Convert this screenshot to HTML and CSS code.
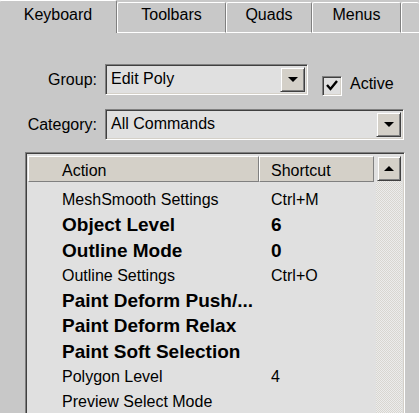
FILE: index.html
```html
<!DOCTYPE html>
<html lang="en">
<head>
    <meta charset="UTF-8">
    <title>Customize User Interface</title>
    <link rel="stylesheet" href="styles.css">
</head>
<body>
    <div class="panel">
        <div class="tabs">
            <div class="tab active">Keyboard</div>
            <div class="tab">Toolbars</div>
            <div class="tab">Quads</div>
            <div class="tab">Menus</div>
            <div class="tab tab-rest"></div>
        </div>

        <div class="page">
            <div class="field-row">
                <span class="field-label">Group:</span>
                <div class="combo combo-group">
                    <span class="combo-text">Edit Poly</span>
                    <span class="combo-btn"><span class="arrow-down"></span></span>
                </div>
                <div class="check">
                    <span class="check-box">
                        <svg width="12" height="11" viewBox="0 0 12 11"><path d="M1 5 L4.5 9 L11 1" fill="none" stroke="#000" stroke-width="2.4"/></svg>
                    </span>
                    <span class="check-label">Active</span>
                </div>
            </div>

            <div class="field-row">
                <span class="field-label">Category:</span>
                <div class="combo combo-category">
                    <span class="combo-text">All Commands</span>
                    <span class="combo-btn"><span class="arrow-down"></span></span>
                </div>
            </div>

            <div class="list">
                <div class="list-main">
                    <div class="list-head">
                        <div class="head-cell col-action">Action</div>
                        <div class="head-cell col-shortcut">Shortcut</div>
                    </div>
                    <div class="list-body">
                        <div class="list-row"><span class="col-action">MeshSmooth Settings</span><span class="col-shortcut">Ctrl+M</span></div>
                        <div class="list-row bold"><span class="col-action">Object Level</span><span class="col-shortcut">6</span></div>
                        <div class="list-row bold"><span class="col-action">Outline Mode</span><span class="col-shortcut">0</span></div>
                        <div class="list-row"><span class="col-action">Outline Settings</span><span class="col-shortcut">Ctrl+O</span></div>
                        <div class="list-row bold"><span class="col-action">Paint Deform Push/...</span><span class="col-shortcut"></span></div>
                        <div class="list-row bold"><span class="col-action">Paint Deform Relax</span><span class="col-shortcut"></span></div>
                        <div class="list-row bold"><span class="col-action">Paint Soft Selection</span><span class="col-shortcut"></span></div>
                        <div class="list-row"><span class="col-action">Polygon Level</span><span class="col-shortcut">4</span></div>
                        <div class="list-row"><span class="col-action">Preview Select Mode</span><span class="col-shortcut"></span></div>
                    </div>
                </div>
                <div class="scrollbar">
                    <span class="scroll-btn"><span class="arrow-up"></span></span>
                    <div class="scroll-track"></div>
                </div>
            </div>
        </div>
    </div>
</body>
</html>
```

FILE: styles.css
```css
/* 3ds Max style customize dialog */
* {
    box-sizing: border-box;
}

body {
    margin: 0;
    background-color: #c8c8c8;
    font-family: "Liberation Sans", Arial, sans-serif;
    font-size: 16px;
    color: #000;
    overflow: hidden;
}

.panel {
    width: 419px;
    height: 413px;
}

/* Tabs */
.tabs {
    display: flex;
    align-items: flex-end;
    height: 33px;
}

.tab {
    height: 31px;
    padding-top: 3px;
    text-align: center;
    border-top: 1px solid #fff;
    border-left: 1px solid #fff;
    border-right: 1px solid #808080;
    border-bottom: 1px solid #fff;
    border-radius: 2px 2px 0 0;
}

.tab.active {
    width: 118px;
    height: 33px;
    padding-top: 5px;
    border-bottom: none;
    margin-left: -1px;
}

.tab:nth-child(2) { width: 109px; }
.tab:nth-child(3) { width: 86px; }
.tab:nth-child(4) { width: 89px; }

.tab-rest {
    flex: 1;
    border-right: none;
}

/* Form rows */
.page {
    padding-top: 31px;
}

.field-row {
    display: flex;
    align-items: center;
    height: 31px;
    margin-bottom: 14px;
}

.field-label {
    width: 97px;
    text-align: right;
    margin-right: 8px;
}

.combo {
    position: relative;
    height: 31px;
    background-color: #e0e0e0;
    border: 1px solid;
    border-color: #808080 #fff #fff #808080;
    box-shadow: inset 1px 1px #404040, inset -1px -1px #d4d0c8;
    padding: 5px 0 0 5px;
}

.combo-group { width: 203px; }
.combo-category { width: 299px; }

.combo-btn {
    position: absolute;
    top: 2px;
    right: 2px;
    bottom: 2px;
    width: 25px;
    display: flex;
    align-items: center;
    justify-content: center;
    background-color: #d4d0c8;
    border: 1px solid;
    border-color: #e0e0e0 #404040 #404040 #e0e0e0;
    box-shadow: inset 1px 1px #fff, inset -1px -1px #808080;
}

.arrow-down {
    width: 0;
    height: 0;
    border-left: 5px solid transparent;
    border-right: 5px solid transparent;
    border-top: 5px solid #000;
}

.arrow-up {
    width: 0;
    height: 0;
    border-left: 5px solid transparent;
    border-right: 5px solid transparent;
    border-bottom: 5px solid #000;
}

/* Checkbox */
.check {
    display: flex;
    align-items: center;
    margin-left: 14px;
    margin-top: 12px;
}

.check-box {
    width: 20px;
    height: 20px;
    display: flex;
    align-items: center;
    justify-content: center;
    background-color: #e0e0e0;
    border: 1px solid;
    border-color: #808080 #fff #fff #808080;
    box-shadow: inset 1px 1px #404040, inset -1px -1px #d4d0c8;
    margin-right: 8px;
}

.check-label {
    margin-top: -3px;
}

/* List */
.list {
    display: flex;
    margin-left: 25px;
    width: 380px;
    height: 270px;
    margin-top: -2px;
    border: 1px solid;
    border-color: #808080 #fff #fff #808080;
    box-shadow: inset 1px 1px #404040, inset -1px -1px #d4d0c8;
    padding: 2px 2px 0 2px;
    background-color: #e0e0e0;
}

.list-main {
    flex: 1;
}

.list-head {
    display: flex;
    height: 26px;
    margin-top: 1px;
}

.head-cell {
    background-color: #d4d0c8;
    border: 1px solid;
    border-color: #fff #808080 #808080 #fff;
    padding-top: 4px;
    line-height: 20px;
}

.list-head .col-action { width: 231px; padding-left: 33px; }
.list-head .col-shortcut { width: 115px; padding-left: 11px; }

.list-body {
    padding-top: 5px;
}

.list-row {
    display: flex;
    height: 25.3px;
    line-height: 25px;
}

.list-row .col-action {
    width: 231px;
    padding-left: 34px;
    white-space: nowrap;
}

.list-row .col-shortcut {
    padding-left: 12px;
}

.list-row.bold {
    font-size: 19px;
    font-weight: bold;
}

/* Scrollbar */
.scrollbar {
    width: 26px;
    display: flex;
    flex-direction: column;
}

.scroll-btn {
    height: 25px;
    margin: 1px 1px 0 1px;
    display: flex;
    align-items: center;
    justify-content: center;
    background-color: #d4d0c8;
    border: 1px solid;
    border-color: #e0e0e0 #404040 #404040 #e0e0e0;
    box-shadow: inset 1px 1px #fff, inset -1px -1px #808080;
}

.scroll-track {
    flex: 1;
    background-color: #e6e6e6;
    background-image: repeating-conic-gradient(#d8d6d0 0 25%, #ececec 0 50%);
    background-size: 2px 2px;
}
```
